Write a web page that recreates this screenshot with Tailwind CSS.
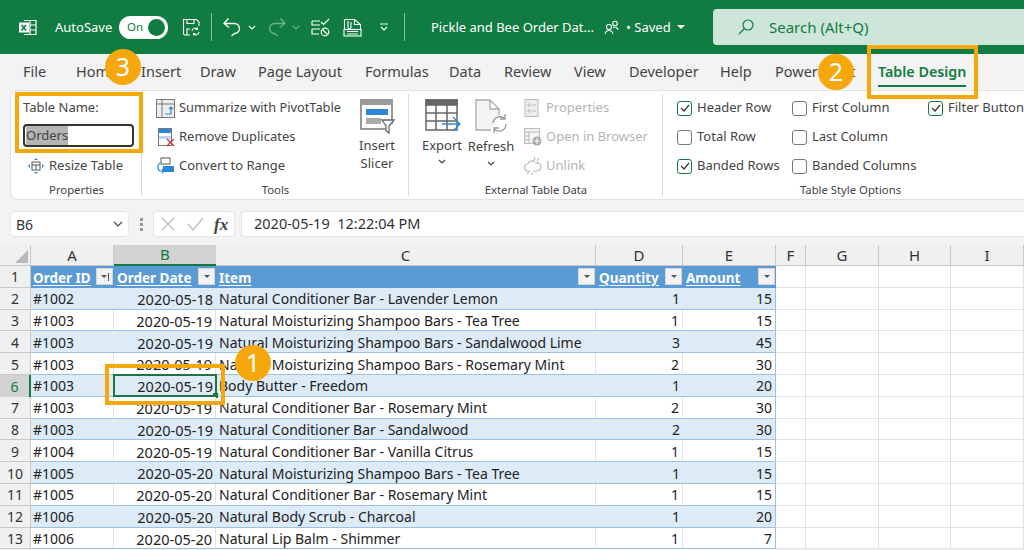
<!DOCTYPE html>
<html lang="en">
<head>
  <meta charset="UTF-8">
  <title>Pickle and Bee Order Data - Excel</title>
  <script src="https://cdn.jsdelivr.net/npm/@tailwindcss/browser@4"></script>
</head>
<body class="bg-[#f3f3f3]">
<div class="relative w-[1024px] h-[550px] overflow-hidden font-['Noto_Sans',sans-serif] text-[#333]">

  <!-- Title bar -->
  <div class="flex items-center h-[54px] bg-[#107c41] text-white text-[13px]">
    <svg class="shrink-0 ml-[18px] w-[19px] h-[19px]" viewBox="0 0 19 19" fill="none" stroke="#fff" stroke-width="1.2"><path d="M6 2.5h12v14H6M12 2.5v14M12 7h6M12 12h6"/><rect x="1" y="4.5" width="10" height="10" fill="#fff" stroke="none"/><path d="M3.5 7l4.5 5.5M8 7l-4.5 5.5" stroke="#107c41" stroke-width="1.6"/></svg>
    <span class="shrink-0 ml-[18px] mt-[2px] w-[64px]">AutoSave</span>
    <div class="shrink-0 flex items-center justify-between w-[49px] h-[23px] rounded-full bg-white pl-[8px] pr-[3px] text-[#107c41] text-[11.5px]">
      <span>On</span><span class="w-[17px] h-[17px] rounded-full bg-[#107c41]"></span>
    </div>
    <svg class="shrink-0 ml-[14px] w-[19px] h-[19px]" viewBox="0 0 19 19" fill="none" stroke="#fff" stroke-width="1.1"><path d="M8 17H3a1.5 1.5 0 0 1-1.5-1.5V1.5h13L17 4v4M5 1.5v4h7v-4M5 17v-6h3"/><path d="M10 13a3 3 0 0 1 5.500-1.500M17 14a3 3 0 0 1-5.500 1.500M15.500 9.500v2h-2M11.500 17.500v-2h2"/></svg>
    <span class="shrink-0 ml-[10px] w-px h-[28px] bg-white/50"></span>
    <svg class="shrink-0 ml-[11px] w-[18px] h-[20px]" viewBox="0 0 18 20" fill="none" stroke="#fff" stroke-width="1.300"><path d="M1 6.500h10.500a5 5 0 0 1 0 10l-3 2.500M5.500 1.500L1 6.500l5 4"/></svg>
    <svg class="shrink-0 ml-[7px] w-[8px] h-[5px]" viewBox="0 0 8 5" fill="none" stroke="#fff" stroke-width="1.200"><path d="M1 1l3 3 3-3"/></svg>
    <svg class="shrink-0 ml-[12px] w-[18px] h-[20px] opacity-40" viewBox="0 0 18 20" fill="none" stroke="#fff" stroke-width="1.300"><path d="M17 6.500H6.500a5 5 0 0 0 0 10l3 2.500M12.500 1.500l4.500 5-5 4"/></svg>
    <svg class="shrink-0 ml-[6px] w-[8px] h-[5px] opacity-40" viewBox="0 0 8 5" fill="none" stroke="#fff" stroke-width="1.200"><path d="M1 1l3 3 3-3"/></svg>
    <svg class="shrink-0 ml-[11px] w-[19px] h-[19px]" viewBox="0 0 19 19" fill="none" stroke="#fff" stroke-width="1.200"><path d="M1 3h8M1 3v4h8M1 11h8M1 11v5h7M10 4l2.500 2.500L18 1"/><circle cx="14" cy="14" r="3.800"/><path d="M11.500 11.500l5 5"/></svg>
    <svg class="shrink-0 ml-[13px] w-[19px] h-[19px]" viewBox="0 0 19 19" fill="none" stroke="#fff" stroke-width="1.100"><path d="M1.500 11V1.500h10l6 5V11M11.500 1.500v5h6"/><path d="M5 3v6.500a1.500 1.500 0 0 0 3 0V4"/><rect x="1" y="11.500" width="17" height="6.500"/><path d="M4 13.500h11M4 16h11"/></svg>
    <svg class="shrink-0 ml-[17px] w-[10px] h-[8px]" viewBox="0 0 10 8" fill="none" stroke="#fff" stroke-width="1.100"><path d="M1 1h8M2 4l3 3 3-3"/></svg>
    <span class="shrink-0 ml-[15px] w-px h-[28px] bg-white/50"></span>
    <span class="shrink-0 ml-[26px] mt-[2px] w-[161px] whitespace-nowrap">Pickle and Bee Order Dat...</span>
    <svg class="shrink-0 ml-[12px] w-[15px] h-[15px]" viewBox="0 0 15 15" fill="none" stroke="#fff" stroke-width="1.100"><circle cx="5" cy="7" r="2.500"/><path d="M1 14c.5-2.500 2-3.500 4-3.500s3.500 1 4 3.500"/><circle cx="11" cy="3.500" r="2.300"/><path d="M9 8c1-1 3-1 4 0 .7.700 1 1.500 1 2"/></svg>
    <span class="shrink-0 ml-[7px] mt-[2px] w-[47px] whitespace-nowrap">• Saved</span>
    <span class="shrink-0 ml-[4px] w-0 h-0 border-x-[4px] border-x-transparent border-t-[4px] border-t-white"></span>
    <div class="shrink-0 flex items-center ml-[28px] w-[312px] h-[36px] rounded-l-[4px] bg-[#cde6d9] text-[#107c41] text-[15px]">
      <svg class="ml-[25px] w-[16px] h-[16px]" viewBox="0 0 16 16" fill="none" stroke="#107c41" stroke-width="1.200"><circle cx="10" cy="6" r="5"/><path d="M6.500 9.500L1 15"/></svg>
      <span class="ml-[15px]">Search (Alt+Q)</span>
    </div>
  </div>

  <!-- Tabs -->
  <div class="flex items-center h-[36px] pl-[23px] bg-[#f3f3f3] text-[14.500px] text-[#444] whitespace-nowrap">
    <span class="w-[53px]">File</span>
    <span class="w-[65px]">Home</span>
    <span class="w-[59px]">Insert</span>
    <span class="w-[58px]">Draw</span>
    <span class="w-[107px]">Page Layout</span>
    <span class="w-[84px]">Formulas</span>
    <span class="w-[55px]">Data</span>
    <span class="w-[70px]">Review</span>
    <span class="w-[55px]">View</span>
    <span class="w-[91px]">Developer</span>
    <span class="w-[55px]">Help</span>
    <span class="w-[103px]">Power Pivot</span>
    <span class="relative font-semibold text-[14.300px] text-[#107c41]">Table Design<span class="absolute left-0 right-0 top-[24px] h-[2px] bg-[#107c41]"></span></span>
  </div>

  <!-- Ribbon -->
  <div class="flex h-[110px] ml-[10px] rounded-l-[7px] bg-white border border-r-0 border-[#e2e2e2] text-[13px] text-[#444] whitespace-nowrap">

    <!-- Properties group -->
    <div class="flex flex-col shrink-0 w-[131px] mt-[3px] pl-[12px] relative">
      <span class="absolute right-0 top-0 bottom-[3px] w-px bg-[#dcdcdc]"></span>
      <div class="mt-[4px] h-[18px] leading-[18px]">Table Name:</div>
      <div class="flex items-center mt-[8px] w-[111px] h-[23px] rounded-[4px] border-2 border-[#333] pl-[1px] leading-none"><span class="flex items-center h-full bg-[#b5b5b5] text-[#444]">Orders</span></div>
      <div class="flex items-center mt-[9px] h-[20px] pl-[5px]">
        <svg class="w-[16px] h-[16px]" viewBox="0 0 16 16" fill="none" stroke="#555"><rect x="4" y="4" width="8" height="8"/><path d="M4 7h8M8 7v5"/><path d="M8 0l2 2H6zM8 16l2-2H6zM0 8l2-2v4zM16 8l-2-2v4z" fill="#2b88d8" stroke="none"/></svg>
        <span class="ml-[5px]">Resize Table</span>
      </div>
      <div class="mt-auto -ml-[12px] text-center text-[11.300px] leading-[18px]">Properties</div>
    </div>

    <!-- Tools group -->
    <div class="flex flex-col shrink-0 w-[267px] mt-[3px] relative">
      <span class="absolute right-0 top-0 bottom-[3px] w-px bg-[#dcdcdc]"></span>
      <div class="flex flex-1">
        <div class="flex flex-col gap-[9px] pl-[14px] pt-[4px] w-[217px]">
          <div class="flex items-center gap-[4px] h-[20px]">
            <svg class="w-[19px] h-[19px]" viewBox="0 0 19 19" fill="none" stroke="#777"><rect x=".5" y=".5" width="18" height="18" fill="#eee"/><path d="M.5 5h18M6 .5v18"/><path d="M9 15h6V8M13 10l2-2 2 2" stroke="#2b88d8" stroke-width="1.200"/></svg>
            <span class="text-[12.800px]">Summarize with PivotTable</span>
          </div>
          <div class="flex items-center gap-[4px] h-[20px]">
            <svg class="w-[19px] h-[19px]" viewBox="0 0 19 19" fill="none"><rect x="2.500" y=".5" width="13" height="17" stroke="#777"/><rect x="3" y="1" width="12" height="4" fill="#2b88d8"/><rect x="3" y="8" width="12" height="3" fill="#b9d7f2"/><path d="M11 11l7 7M18 11l-7 7" stroke="#d13438" stroke-width="1.300"/></svg>
            <span>Remove Duplicates</span>
          </div>
          <div class="flex items-center gap-[4px] h-[20px]">
            <svg class="w-[19px] h-[19px]" viewBox="0 0 19 19" fill="none"><rect x="5" y="1" width="9" height="6" stroke="#555"/><rect x="7" y="9" width="11" height="6" fill="#2b88d8"/><path d="M4 6C1 8 1 12 4 14h4M6 12l2 2-2 2" stroke="#2b88d8" stroke-width="1.200"/></svg>
            <span>Convert to Range</span>
          </div>
        </div>
        <div class="flex flex-col items-center w-[36px] pt-[5px] leading-[18px]">
          <svg class="w-[35px] h-[35px] mb-[2px]" viewBox="0 0 35 35" fill="none"><path d="M26 30H1V1h31v24" stroke="#777" stroke-width="1.500"/><rect x="1" y="1" width="31" height="5" fill="#999"/><rect x="6" y="10" width="22" height="6" fill="#2b88d8"/><rect x="6" y="19" width="15" height="6" fill="#aaa"/><path d="M22 21h12l-5 6v7l-3-2v-5z" fill="#fff" stroke="#666" stroke-width="1.300"/></svg>
          <span>Insert</span><span>Slicer</span>
        </div>
      </div>
      <div class="text-center text-[11.300px] leading-[18px]">Tools</div>
    </div>

    <!-- External Table Data group -->
    <div class="flex flex-col shrink-0 w-[254px] mt-[3px] relative">
      <span class="absolute right-0 top-0 bottom-[3px] w-px bg-[#dcdcdc]"></span>
      <div class="flex flex-1">
        <div class="flex flex-col items-center w-[66px] pt-[5px] leading-[18px]">
          <svg class="w-[36px] h-[35px] mb-[2px] ml-[1px]" viewBox="0 0 36 35" fill="none" stroke="#666" stroke-width="1.500"><rect x="1" y="1" width="31" height="30" fill="#fff"/><rect x="1" y="1" width="31" height="5" fill="#666"/><path d="M1 14h31M1 22h31M11 6v25M22 6v25"/><path d="M17 25h17M28 18l7 7-7 7" stroke="#2b88d8" stroke-width="1.300" fill="none"/></svg>
          <span>Export</span>
          <svg class="mt-[5px] w-[8px] h-[5px]" viewBox="0 0 8 5" fill="none" stroke="#444" stroke-width="1.200"><path d="M1 1l3 3 3-3"/></svg>
        </div>
        <div class="flex flex-col items-center w-[32px] pt-[5px] leading-[18px]">
          <svg class="shrink-0 w-[32px] h-[35px] mb-[3px]" viewBox="0 0 32 35" fill="none" stroke="#aaa" stroke-width="1.300"><path d="M16 31H1V1h14l9 9v6M15 1v9h9" fill="#f4f4f4"/><path d="M18 24a7 7 0 0 1 12-4M31 25a7 7 0 0 1-12 5M30 15v5h-5M19 34v-5h5" stroke="#999"/></svg>
          <span>Refresh</span>
          <svg class="mt-[6px] w-[8px] h-[5px]" viewBox="0 0 8 5" fill="none" stroke="#444" stroke-width="1.200"><path d="M1 1l3 3 3-3"/></svg>
        </div>
        <div class="flex flex-col gap-[9px] pl-[17px] pt-[4px] text-[#b4b4b4]">
          <div class="flex items-center gap-[6px] h-[20px]">
            <svg class="w-[16px] h-[18px]" viewBox="0 0 16 18" fill="#eee" stroke="#bbb"><rect x="1" y=".5" width="13" height="17"/><path d="M4 5h2v2H4zM4 11h2v2H4zM8 6h4M8 12h4"/></svg>
            <span>Properties</span>
          </div>
          <div class="flex items-center gap-[4px] h-[20px]">
            <svg class="w-[18px] h-[18px]" viewBox="0 0 18 18" fill="none" stroke="#bbb"><rect x=".5" y=".5" width="15" height="15" fill="#f4f4f4"/><path d="M.5 4h15M5 4v11M.5 8h5M.5 12h5"/><circle cx="13" cy="13" r="4.500" fill="#aaa" stroke="none"/><path d="M10 13h6M13 10v6" stroke="#fff"/></svg>
            <span>Open in Browser</span>
          </div>
          <div class="flex items-center gap-[4px] h-[20px]">
            <svg class="w-[18px] h-[18px]" viewBox="0 0 18 18" fill="none" stroke="#bbb" stroke-width="1.200"><path d="M6 14H4a3.500 3.500 0 0 1 0-7c.5-3 4-4 6-2M11 6c3-1 6 1 6 4s-3 4-6 4h-2M11 0l-1 4M15 1l-2 3M3 17l2-2M8 18v-3"/></svg>
            <span>Unlink</span>
          </div>
        </div>
      </div>
      <div class="text-center text-[11.300px] leading-[18px]">External Table Data</div>
    </div>

    <!-- Table Style Options group -->
    <div class="flex flex-col shrink-0 w-[361px] mt-[3px]">
      <div id="options" class="flex-1 grid grid-cols-[115px_136px_auto] grid-rows-[20px_20px_20px] gap-y-[9px] pl-[14px] pt-[4px]"></div>
      <div class="w-[375px] text-center text-[11.300px] leading-[18px]">Table Style Options</div>
    </div>
  </div>

  <!-- Formula bar -->
  <div class="flex items-center h-[26px] mt-[11px] ml-[10px] text-[14px] text-[#333]">
    <div class="flex items-center justify-between w-[119px] h-[26px] rounded-[4px] bg-white border border-[#e6e6e6] pl-[5px] pr-[5px]">
      <span>B6</span>
      <svg class="w-[10px] h-[6px]" viewBox="0 0 10 6" fill="none" stroke="#444" stroke-width="1.200"><path d="M1 1l4 4 4-4"/></svg>
    </div>
    <div class="flex flex-col gap-[2px] ml-[11px] w-[3px]"><span class="h-[3px] bg-[#999]"></span><span class="h-[3px] bg-[#999]"></span><span class="h-[3px] bg-[#999]"></span></div>
    <div class="flex items-center ml-[10px] w-[82px] h-[26px] rounded-[4px] bg-white border border-[#e6e6e6] pl-[7px]">
      <svg class="w-[14px] h-[14px]" viewBox="0 0 14 14" fill="none" stroke="#bbb" stroke-width="1.200"><path d="M1 1l12 12M13 1L1 13"/></svg>
      <svg class="ml-[12px] w-[17px] h-[14px]" viewBox="0 0 17 14" fill="none" stroke="#bbb" stroke-width="1.200"><path d="M1 7l5 6L16 1"/></svg>
      <span class="ml-[10px] font-['Liberation_Serif',serif] italic font-bold text-[17px] text-[#444] leading-none">fx</span>
    </div>
    <div class="flex items-center flex-1 ml-[6px] h-[26px] rounded-l-[4px] bg-white border border-r-0 border-[#e6e6e6] pl-[12px] text-[14.500px] whitespace-pre">2020-05-19  12:22:04 PM</div>
  </div>

  <!-- Sheet -->
  <div id="sheet" class="mt-[8px] grid grid-cols-[31px_83px_102px_380px_87px_93px_30px_73px_72px_73px] grid-rows-[21px_repeat(13,21.800px)] text-[14px] text-[#222] leading-none whitespace-nowrap"></div>

  <!-- Callouts -->
  <div class="absolute left-[15px] top-[92px] w-[128px] h-[61px] border-4 border-[#f5a70c]"></div>
  <div class="absolute left-[867px] top-[45px] w-[111px] h-[54px] border-4 border-[#f5a70c]"></div>
  <div class="absolute left-[105px] top-[364px] w-[120px] h-[41px] border-4 border-[#f5a70c]"></div>
  <div class="absolute left-[105px] top-[49px] w-[36px] h-[36px] rounded-full bg-[#f5a70c] text-white text-[25px] flex items-center justify-center">3</div>
  <div class="absolute left-[818px] top-[54px] w-[36px] h-[36px] rounded-full bg-[#f5a70c] text-white text-[25px] flex items-center justify-center">2</div>
  <div class="absolute left-[235px] top-[345px] w-[36px] h-[36px] rounded-full bg-[#f5a70c] text-white text-[25px] flex items-center justify-center">1</div>
</div>

<script>
  // Ribbon checkboxes
  const options = [
    ["Header Row", true], ["First Column", false], ["Filter Button", true],
    ["Total Row", false], ["Last Column", false], ["", false],
    ["Banded Rows", true], ["Banded Columns", false], ["", false]
  ];
  document.getElementById("options").innerHTML = options.map(([label, on]) => {
    if (!label) return "<div></div>";
    const box = on
      ? `<span class="flex items-center justify-center w-[15px] h-[15px] rounded-[3px] border border-[#107c41]"><svg class="w-[10px] h-[8px]" viewBox="0 0 10 8" fill="none" stroke="#333" stroke-width="1.200"><path d="M1 4l3 3 5-6"/></svg></span>`
      : `<span class="w-[15px] h-[15px] rounded-[3px] border border-[#777]"></span>`;
    return `<div class="flex items-center gap-[5px]">${box}<span>${label}</span></div>`;
  }).join("");

  const rows = [
    ["#1002", "2020-05-18", "Natural Conditioner Bar - Lavender Lemon", 1, 15],
    ["#1003", "2020-05-19", "Natural Moisturizing Shampoo Bars - Tea Tree", 1, 15],
    ["#1003", "2020-05-19", "Natural Moisturizing Shampoo Bars - Sandalwood Lime", 3, 45],
    ["#1003", "2020-05-19", "Natural Moisturizing Shampoo Bars - Rosemary Mint", 2, 30],
    ["#1003", "2020-05-19", "Body Butter - Freedom", 1, 20],
    ["#1003", "2020-05-19", "Natural Conditioner Bar - Rosemary Mint", 2, 30],
    ["#1003", "2020-05-19", "Natural Conditioner Bar - Sandalwood", 2, 30],
    ["#1004", "2020-05-19", "Natural Conditioner Bar - Vanilla Citrus", 1, 15],
    ["#1005", "2020-05-20", "Natural Moisturizing Shampoo Bars - Tea Tree", 1, 15],
    ["#1005", "2020-05-20", "Natural Conditioner Bar - Rosemary Mint", 1, 15],
    ["#1006", "2020-05-20", "Natural Body Scrub - Charcoal", 1, 20],
    ["#1006", "2020-05-20", "Natural Lip Balm - Shimmer", 1, 7]
  ];

  const filterBtn = (sorted) => `<span class="absolute right-[1px] top-[2px] flex items-center justify-center w-[17px] h-[17px] bg-[#f2f2f2] border border-[#d5d5d5]"><span class="w-0 h-0 border-x-[3px] border-x-transparent border-t-[3px] border-t-[#555]"></span>${sorted ? '<span class="ml-[1px] w-px h-[8px] bg-[#555]"></span>' : ""}</span>`;

  let html = `<div class="relative bg-[#f0f0f0] border-r border-b border-[#c8c8c8] overflow-hidden"><span class="absolute right-[2px] bottom-[2px] w-0 h-0 border-l-[13px] border-l-transparent border-b-[13px] border-b-[#b9b9b9]"></span></div>`;

  // Column letters
  ["A", "B", "C", "D", "E", "F", "G", "H", "I"].forEach((col) => {
    html += col === "B"
      ? `<div class="flex items-center justify-center bg-[#d2d2d2] border-b-2 border-[#107c41] text-[#107c41] text-[15px]">${col}</div>`
      : `<div class="flex items-center justify-center bg-[#f0f0f0] border-r border-b border-[#c8c8c8] text-[15px] text-[#333]">${col}</div>`;
  });

  // Table header
  html += `<div class="flex items-center justify-center pt-[2px] bg-[#f0f0f0] border-r border-b border-[#c8c8c8] text-[14px] text-[#333]">1</div>`;
  [["Order ID", true], ["Order Date"], ["Item"], ["Quantity"], ["Amount"]].forEach(([name, sorted]) => {
    html += `<div class="relative flex items-center ${sorted ? "pl-[2px]" : "pl-[3px]"} pt-[3px] bg-[#5b9bd5] text-[13.500px] font-bold text-white underline underline-offset-2">${name}${filterBtn(sorted)}</div>`;
  });
  html += blanks();

  function blanks() {
    return `<div class="border-r border-b border-[#e2e2e2] bg-white"></div>`.repeat(4);
  }

  // Data rows
  rows.forEach((row, i) => {
    const n = i + 2;
    const band = n % 2 === 0;
    const fill = band ? "bg-[#ddebf7]" : "bg-white";
    const sep = band ? "" : "border-r border-[#e2e2e2]";
    const current = n === 6;
    html += current
      ? `<div class="flex items-center justify-center pt-[2px] bg-[#d2d2d2] border-r-2 border-[#107c41] text-[14px] text-[#107c41]">${n}</div>`
      : `<div class="flex items-center justify-center pt-[2px] bg-[#f0f0f0] border-r border-b border-[#c8c8c8] text-[14px] text-[#333]">${n}</div>`;
    html += `<div class="flex items-center pl-[2px] pt-[2px] ${fill} ${sep} border-b border-b-[#9bc2e6]">${row[0]}</div>`;
    html += `<div class="relative flex items-center justify-end pr-[3px] pt-[2px] ${fill} ${sep} border-b border-b-[#9bc2e6] text-[14.500px]">${row[1]}${current ? '<span class="absolute -left-px -top-px -right-px -bottom-px border-2 border-[#217346]"></span><span class="absolute -right-[2px] -bottom-[2px] w-[5px] h-[5px] bg-[#217346]"></span>' : ""}</div>`;
    html += `<div class="flex items-center pl-[3px] pt-[2px] ${fill} ${sep} border-b border-b-[#9bc2e6]">${row[2]}</div>`;
    html += `<div class="flex items-center justify-end pr-[3px] pt-[2px] ${fill} ${sep} border-b border-b-[#9bc2e6]">${row[3]}</div>`;
    html += `<div class="flex items-center justify-end pr-[3px] pt-[2px] ${fill} border-r border-b border-r-[#9bc2e6] border-b-[#9bc2e6]">${row[4]}</div>`;
    html += blanks();
  });

  document.getElementById("sheet").innerHTML = html;
</script>
</body>
</html>
